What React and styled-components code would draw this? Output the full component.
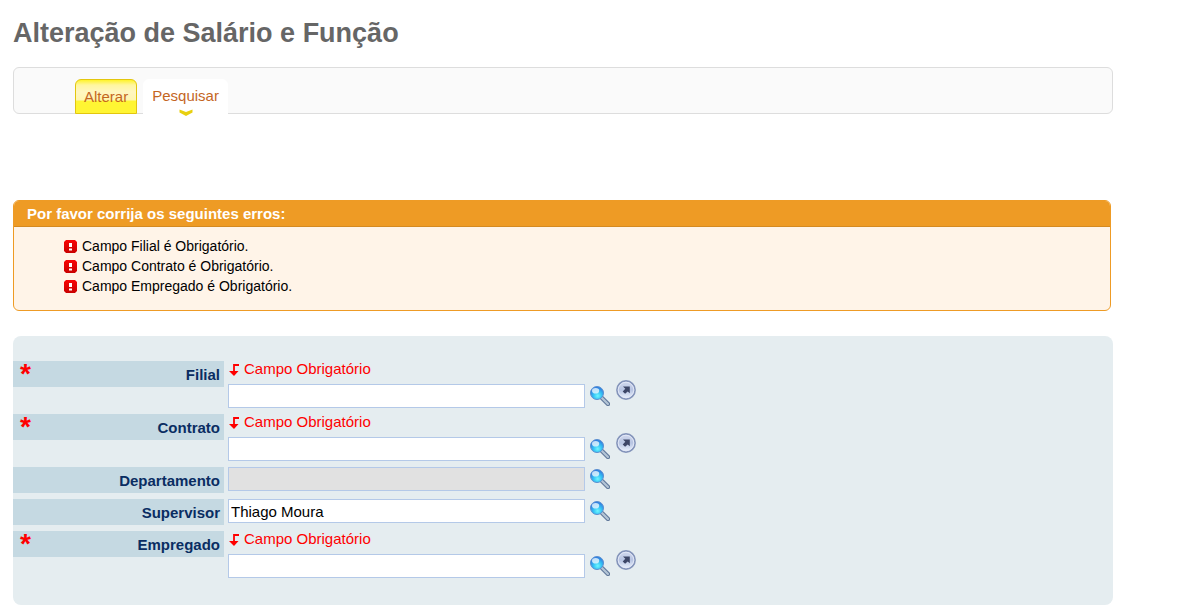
import React, { useState } from 'react'
import styled, { createGlobalStyle, css } from 'styled-components'

const GlobalStyle = createGlobalStyle`
    body {
        margin: 0;
        background: #fff;
        color: #000;
        font-family: Arial, 'Liberation Sans', sans-serif;
        font-size: 15px;
    }
    *, *::before, *::after {
        box-sizing: border-box;
    }
`

const Page = styled.main`
    padding: 17px 86px 0 13px;
`

const Title = styled.h1`
    margin: 0 0 18px;
    color: #666;
    font-size: 27px;
    line-height: 32px;
`

const TabBar = styled.nav`
    display: flex;
    align-items: flex-start;
    gap: 6px;
    height: 47px;
    padding: 11px 61px 0;
    border: 1px solid #ddd;
    border-radius: 6px;
    background: #fafafa;
`

const Tab = styled.a`
    display: flex;
    flex-direction: column;
    align-items: center;
    height: 38px;
    padding: 8px 9px 0;
    border-radius: 6px 6px 0 0;
    background: #fff;
    color: #c4661f;
    line-height: 18px;
    text-decoration: none;

    ${props =>
        props.$active &&
        css`
            height: 35px;
            padding: 8px 8px 0;
            border: 1px solid #e3c60e;
            background: linear-gradient(
                #fff32a 0,
                #fff6a0 5px,
                #fff6c0 12px,
                #fff5b0 20px,
                #fff533 21px,
                #fff533 100%
            );
        `}
`

const TabArrow = styled.svg`
    width: 14px;
    height: 7px;
    margin-top: 4px;
`

const ErrorBox = styled.section`
    margin: 86px 2px 25px 0;
    border: 1px solid #ee9b25;
    border-radius: 6px;
    background: #fff4e8;
    overflow: hidden;
`

const ErrorTitle = styled.h2`
    margin: 0;
    padding: 4px 13px 3px;
    border-bottom: 1px solid #d48a21;
    background: #ee9b25;
    color: #fff;
    font-size: 15px;
    line-height: 18px;
`

const ErrorList = styled.ul`
    margin: 0;
    padding: 9px 50px 14px;
    list-style: none;
    font-size: 14px;
    line-height: 20px;
`

const ErrorItem = styled.li`
    display: flex;
    align-items: center;
    gap: 5px;

    svg {
        width: 13px;
        height: 13px;
    }
`

const Form = styled.form`
    display: flex;
    flex-direction: column;
    gap: 6px;
    padding: 25px 0 27px;
    border-radius: 8px;
    background: #e5edf0;
`

const Row = styled.div`
    display: flex;
    align-items: flex-start;
    gap: 4px;
`

const Label = styled.label`
    display: flex;
    flex: none;
    justify-content: space-between;
    width: 211px;
    height: 26px;
    padding: 0 4px 0 7px;
    background: #c5d9e2;
    color: #0a2d62;
    font-weight: bold;
    line-height: 28px;
`

const Required = styled.span`
    color: #f00;
    font-size: 28px;
    line-height: 26px;
`

const Field = styled.div`
    display: flex;
    flex: 1;
    flex-direction: column;
`

const FieldError = styled.p`
    display: flex;
    align-items: center;
    gap: 5px;
    margin: 0;
    padding-bottom: 7px;
    color: #f00;
    line-height: 16px;

    svg {
        width: 11px;
        height: 13px;
    }
`

const Controls = styled.div`
    display: flex;
    align-items: flex-start;
    height: 24px;
`

const Input = styled.input`
    width: 357px;
    height: 24px;
    padding: 0 2px;
    border: 1px solid #b4c9e8;
    background: #fff;
    color: #000;
    font: inherit;

    &:disabled {
        background: #e1e1e1;
    }
`

const IconButton = styled.button`
    margin: ${props => (props.$raised ? '-4px 0 0 6px' : '2px 0 0 5px')};
    padding: 0;
    border: 0;
    background: none;
    cursor: pointer;

    svg {
        display: block;
        width: 20px;
        height: 20px;
    }
`

const AlertIcon = () => (
    <svg viewBox="0 0 13 13" aria-hidden="true">
        <defs>
            <linearGradient id="alert" x2="0" y2="1">
                <stop offset="0" stopColor="#f80505" />
                <stop offset="1" stopColor="#c90000" />
            </linearGradient>
        </defs>
        <path d="M2 0h9l2 2v9l-2 2H2l-2-2V2z" fill="url(#alert)" />
        <path d="M5 3h3v4H5zM5 8.5h3v2H5z" fill="#fff" />
    </svg>
)

const DownArrowIcon = () => (
    <svg viewBox="0 0 11 13" aria-hidden="true">
        <path d="M11 2H6V9" fill="none" stroke="#f00" strokeWidth="1.8" />
        <path d="M1 8h9.5L6 13z" fill="#f00" />
    </svg>
)

const SearchIcon = () => (
    <svg viewBox="0 0 20 20" aria-hidden="true">
        <defs>
            <radialGradient id="lens" cx="0.55" cy="0.72" r="0.62">
                <stop offset="0" stopColor="#6ff6ff" />
                <stop offset="0.5" stopColor="#35c4f5" />
                <stop offset="1" stopColor="#2f80e0" />
            </radialGradient>
        </defs>
        <path d="M12 12l6 6" stroke="#60789a" strokeWidth="4.4" strokeLinecap="round" />
        <path d="M12 12l6 6" stroke="#b4c5d6" strokeWidth="2.2" strokeLinecap="round" />
        <circle cx="7" cy="7" r="6.5" fill="url(#lens)" stroke="#5b8fd0" />
        <ellipse cx="5.6" cy="4.8" rx="3.6" ry="2.8" fill="#eaf6ff" opacity="0.8" />
    </svg>
)

const OpenIcon = () => (
    <svg viewBox="0 0 20 20" aria-hidden="true">
        <defs>
            <linearGradient id="disc" x2="0" y2="1">
                <stop offset="0" stopColor="#d3daee" />
                <stop offset="0.5" stopColor="#b7c4e2" />
                <stop offset="1" stopColor="#edf4ff" />
            </linearGradient>
        </defs>
        <circle cx="10" cy="10" r="9.1" fill="url(#disc)" stroke="#8494ba" strokeWidth="1.6" />
        <circle cx="10" cy="10" r="7.8" fill="none" stroke="#e3e9f7" strokeWidth="0.9" />
        <path d="M7 6.5h6.8v6.8l-2.1-1.9-2.6 2.3-2.4-2.3 2.6-2.6z" fill="#3d4667" />
    </svg>
)

const errors = [
    'Campo Filial é Obrigatório.',
    'Campo Contrato é Obrigatório.',
    'Campo Empregado é Obrigatório.',
]

const fields = [
    { id: 'filial', label: 'Filial', required: true },
    { id: 'contrato', label: 'Contrato', required: true },
    { id: 'departamento', label: 'Departamento', disabled: true },
    { id: 'supervisor', label: 'Supervisor', value: 'Thiago Moura' },
    { id: 'empregado', label: 'Empregado', required: true },
]

const FormRow = ({ id, label, required, disabled, value: initial = '' }) => {
    const [value, setValue] = useState(initial)

    return (
        <Row>
            <Label htmlFor={id}>
                <Required>{required && '*'}</Required>
                {label}
            </Label>
            <Field>
                {required && (
                    <FieldError id={`${id}-error`}>
                        <DownArrowIcon />
                        Campo Obrigatório
                    </FieldError>
                )}
                <Controls>
                    <Input
                        id={id}
                        type="text"
                        value={value}
                        disabled={disabled}
                        aria-describedby={required ? `${id}-error` : undefined}
                        onChange={e => setValue(e.target.value)}
                    />
                    <IconButton type="button" aria-label={`Pesquisar ${label}`}>
                        <SearchIcon />
                    </IconButton>
                    {required && (
                        <IconButton type="button" $raised aria-label={`Abrir ${label}`}>
                            <OpenIcon />
                        </IconButton>
                    )}
                </Controls>
            </Field>
        </Row>
    )
}

const App = () => (
    <>
        <GlobalStyle />
        <Page>
            <Title>Alteração de Salário e Função</Title>
            <TabBar>
                <Tab href="#alterar" $active>
                    Alterar
                </Tab>
                <Tab href="#pesquisar">
                    Pesquisar
                    <TabArrow viewBox="0 0 14 7" aria-hidden="true">
                        <path d="M.5.5L7 3 13.5.5v3L7 7 .5 3.5z" fill="#e8d010" />
                    </TabArrow>
                </Tab>
            </TabBar>
            <ErrorBox role="alert">
                <ErrorTitle>Por favor corrija os seguintes erros:</ErrorTitle>
                <ErrorList>
                    {errors.map(error => (
                        <ErrorItem key={error}>
                            <AlertIcon />
                            {error}
                        </ErrorItem>
                    ))}
                </ErrorList>
            </ErrorBox>
            <Form>
                {fields.map(field => (
                    <FormRow key={field.id} {...field} />
                ))}
            </Form>
        </Page>
    </>
)

export default App
